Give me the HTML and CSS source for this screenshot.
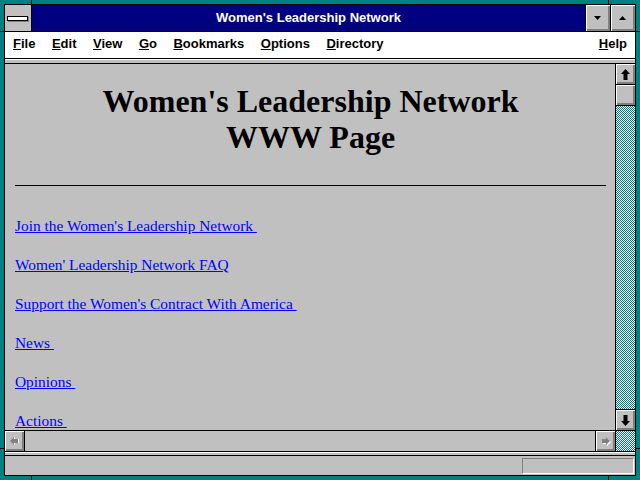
FILE: index.html
```html
<!DOCTYPE html>
<html lang="en">
<head>
    <meta charset="UTF-8" />
    <title>Women's Leadership Network</title>
    <link rel="stylesheet" href="styles.css">
</head>
<body>
    <div class="frame">
        <span class="notch notch-top-l"></span>
        <span class="notch notch-top-r"></span>
        <span class="notch notch-bottom-l"></span>
        <span class="notch notch-bottom-r"></span>
        <span class="notch notch-left-t"></span>
        <span class="notch notch-left-b"></span>
        <span class="notch notch-right-t"></span>
        <span class="notch notch-right-b"></span>

        <div class="window">
            <div class="titlebar">
                <div class="sysmenu"><span class="sysbar"></span></div>
                <div class="caption">Women's Leadership Network</div>
                <div class="capbtn">
                    <svg width="7" height="4" viewBox="0 0 7 4"><polygon points="0,0 7,0 3.5,4" fill="#000"/></svg>
                </div>
                <div class="capbtn">
                    <svg width="7" height="4" viewBox="0 0 7 4"><polygon points="0,4 7,4 3.5,0" fill="#000"/></svg>
                </div>
            </div>

            <div class="menubar">
                <span><u>F</u>ile</span>
                <span><u>E</u>dit</span>
                <span><u>V</u>iew</span>
                <span><u>G</u>o</span>
                <span><u>B</u>ookmarks</span>
                <span><u>O</u>ptions</span>
                <span><u>D</u>irectory</span>
                <span class="help"><u>H</u>elp</span>
            </div>
            <div class="strip"></div>

            <div class="viewport">
                <div class="page">
                    <h1>Women's Leadership Network<br>WWW Page</h1>
                    <hr>
                    <div class="links">
                        <a href="#">Join the Women's Leadership Network&nbsp;</a>
                        <a href="#">Women' Leadership Network FAQ</a>
                        <a href="#">Support the Women's Contract With America&nbsp;</a>
                        <a href="#">News&nbsp;</a>
                        <a href="#">Opinions&nbsp;</a>
                        <a href="#">Actions&nbsp;</a>
                    </div>
                </div>

                <div class="vscroll">
                    <div class="sbtn">
                        <svg width="9" height="11" viewBox="0 0 9 11"><polygon points="4.5,0 9,5 6.5,5 6.5,11 2.5,11 2.5,5 0,5" fill="#000"/></svg>
                    </div>
                    <div class="sbtn thumb"></div>
                    <div class="track">
                        <svg class="dither" width="100%" height="100%" shape-rendering="crispEdges">
                            <defs>
                                <pattern id="dots" width="2" height="2" patternUnits="userSpaceOnUse">
                                    <rect width="2" height="2" fill="#fff"/>
                                    <rect width="1" height="1" fill="#008080"/>
                                    <rect x="1" y="1" width="1" height="1" fill="#008080"/>
                                </pattern>
                            </defs>
                            <rect width="100%" height="100%" fill="url(#dots)"/>
                        </svg>
                    </div>
                    <div class="sbtn down">
                        <svg width="9" height="11" viewBox="0 0 9 11"><polygon points="4.5,11 9,6 6.5,6 6.5,0 2.5,0 2.5,6 0,6" fill="#000"/></svg>
                    </div>
                </div>
            </div>

            <div class="hscroll">
                <div class="hbtn left">
                    <svg width="10" height="9" viewBox="0 0 10 9">
                        <polygon points="1,4 5,0 5,2 9,2 9,6 5,6 5,8" fill="#fff"/>
                        <polygon points="0,4 4,0 4,2 8,2 8,6 4,6 4,8" fill="#808080"/>
                    </svg>
                </div>
                <div class="htrack"></div>
                <div class="hbtn right">
                    <svg width="10" height="9" viewBox="0 0 10 9">
                        <polygon points="10,5 6,1 6,3 2,3 2,7 6,7 6,9" fill="#fff"/>
                        <polygon points="9,4 5,0 5,2 1,2 1,6 5,6 5,8" fill="#808080"/>
                    </svg>
                </div>
                <div class="corner">
                    <svg class="dither" width="100%" height="100%" shape-rendering="crispEdges">
                        <rect width="100%" height="100%" fill="url(#dots)"/>
                    </svg>
                </div>
            </div>
            <div class="strip strip-low"></div>

            <div class="status">
                <div class="status-box"></div>
            </div>
        </div>
    </div>
</body>
</html>
```

FILE: styles.css
```css
:root {
    --face: #c0c0c0;
    --shadow: #808080;
    --frame: #008080;
    --navy: #000080;
}
body {
    margin: 0;
    background: var(--frame);
    font-family: "Liberation Sans", Arial, sans-serif;
}
.frame {
    position: relative;
    width: 640px;
    height: 480px;
    box-sizing: border-box;
    padding: 4px;
    background: var(--frame);
}
/* kleine Markierungen im Rahmen (Griffecken) */
.notch {
    position: absolute;
    background: #000;
}
.notch-top-l, .notch-top-r { top: 0; width: 1px; height: 4px; }
.notch-bottom-l, .notch-bottom-r { bottom: 0; width: 1px; height: 4px; }
.notch-top-l, .notch-bottom-l { left: 31px; }
.notch-top-r, .notch-bottom-r { left: 608px; }
.notch-left-t, .notch-left-b { left: 0; width: 4px; height: 1px; }
.notch-right-t, .notch-right-b { right: 0; width: 4px; height: 1px; }
.notch-left-t, .notch-right-t { top: 31px; }
.notch-left-b, .notch-right-b { top: 448px; }

.window {
    height: 100%;
    box-sizing: border-box;
    border: 1px solid #000;
    background: var(--face);
    display: flex;
    flex-direction: column;
}

/* Titelleiste */
.titlebar {
    display: flex;
    height: 26px;
    border-bottom: 1px solid #000;
}
.sysmenu {
    width: 26px;
    border-right: 1px solid #000;
    background: var(--face);
    display: flex;
    align-items: center;
    justify-content: center;
}
.sysbar {
    width: 19px;
    height: 3px;
    background: #fff;
    border: 1px solid #000;
    box-shadow: 1px 1px 0 var(--shadow);
    margin: 1px 1px 0 0;
}
.caption {
    flex: 1;
    background: var(--navy);
    color: #fff;
    font-weight: bold;
    font-size: 13px;
    line-height: 26px;
    text-align: center;
}
.capbtn {
    width: 24px;
    border-left: 1px solid #000;
    background: var(--face);
    box-shadow: inset 1px 1px #fff, inset -1px -1px var(--shadow), inset -2px -2px var(--shadow);
    display: flex;
    align-items: center;
    justify-content: center;
}
.capbtn svg { display: block; margin: 0 1px 1px 0; }

/* Menü */
.menubar {
    display: flex;
    gap: 16.5px;
    height: 26px;
    padding: 0 8px;
    background: #fff;
    border-bottom: 1px solid #000;
    font-size: 13px;
    font-weight: bold;
    line-height: 23px;
}
.menubar .help { margin-left: auto; }

.strip {
    height: 3px;
    border-top: 1px solid #fff;
    border-bottom: 1px solid #000;
    background: var(--face);
}
.strip-low { height: 2px; }

/* Inhalt */
.viewport {
    display: flex;
    height: 366px;
}
.page {
    flex: 1;
    padding: 0 9px 0 10px;
    overflow: hidden;
    font-family: "Liberation Serif", "Times New Roman", serif;
    color: #000;
}
.page h1 {
    margin: 19px 0 0;
    font-size: 32px;
    line-height: 36px;
    text-align: center;
}
.page hr {
    margin: 30px 0 0;
    border: none;
    border-top: 1px solid #000;
    height: 0;
}
.links {
    display: flex;
    flex-direction: column;
    align-items: flex-start;
    gap: 20px;
    margin-top: 30px;
}
.links a {
    color: #0000ff;
    font-size: 15.4px;
    line-height: 19px;
}

/* Bildlaufleisten */
.vscroll {
    width: 19px;
    border-left: 1px solid #000;
    display: flex;
    flex-direction: column;
}
.sbtn {
    height: 20px;
    border-bottom: 1px solid #000;
    background: var(--face);
    box-shadow: inset 1px 1px #fff, inset -1px -1px var(--shadow), inset -2px -2px var(--shadow);
    display: flex;
    align-items: center;
    justify-content: center;
}
.sbtn.down {
    border-bottom: none;
    border-top: 1px solid #000;
}
.track {
    flex: 1;
    overflow: hidden;
}
.dither { display: block; }
.hscroll {
    display: flex;
    height: 20px;
    border-top: 1px solid #000;
    border-bottom: 1px solid #000;
}
.hbtn {
    width: 19px;
    background: var(--face);
    box-shadow: inset 1px 1px #fff, inset -1px -1px var(--shadow), inset -2px -2px var(--shadow);
    display: flex;
    align-items: center;
    justify-content: center;
}
.hbtn.left { border-right: 1px solid #000; }
.hbtn.right { border-left: 1px solid #000; }
.htrack { flex: 1; }
.corner {
    width: 19px;
    border-left: 1px solid #000;
    overflow: hidden;
}

/* Statuszeile */
.status {
    flex: 1;
    display: flex;
    justify-content: flex-end;
    padding: 2px 1px 0 0;
}
.status-box {
    width: 110px;
    height: 14px;
    border: 1px solid;
    border-color: var(--shadow) #fff #fff var(--shadow);
}
```
